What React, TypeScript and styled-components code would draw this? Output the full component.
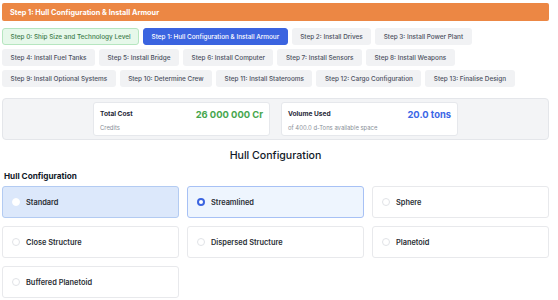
import * as React from 'react'
import styled, { createGlobalStyle, css } from 'styled-components'

const GlobalStyle = createGlobalStyle`
  html, body {
    margin: 0;
    padding: 0;
    background: #ffffff;
    font-family: Inter, "Noto Sans", sans-serif;
    color: #1f2937;
  }
`

const Page = styled.div`
  width: 547px;
  margin: 3px 0 0 2px;
  display: flex;
  flex-direction: column;
`

const StepHeader = styled.div`
  height: 18px;
  background: #ec8744;
  border-radius: 2px;
  color: #ffffff;
  font-size: 7.3px;
  font-weight: 700;
  display: flex;
  align-items: center;
  padding: 0 8px;
`

const StepNav = styled.div`
  display: flex;
  flex-wrap: wrap;
  gap: 4px;
  margin-top: 7px;
`

type StepState = 'done' | 'active' | 'todo'

const StepButton = styled.div<{ $state: StepState }>`
  height: 17px;
  box-sizing: border-box;
  padding: 0 7.5px;
  display: flex;
  align-items: center;
  font-size: 6.4px;
  font-weight: 500;
  border-radius: 3px;
  border: 0.5px solid transparent;
  background: #f1f2f4;
  color: #4b5060;
  ${({ $state }) => $state === 'done' && css`
    background: #e6f8ea;
    border-color: #b6e6c0;
    color: #3f7d4d;
  `}
  ${({ $state }) => $state === 'active' && css`
    background: #3b64e0;
    border-color: #3b64e0;
    color: #ffffff;
  `}
`

const StatsPanel = styled.div`
  margin-top: 11px;
  height: 42px;
  box-sizing: border-box;
  background: #f3f4f6;
  border: 1px solid #e4e6ea;
  border-radius: 4px;
  display: flex;
  justify-content: center;
  align-items: center;
  gap: 11px;
`

const StatCard = styled.div`
  width: 177px;
  height: 34px;
  box-sizing: border-box;
  background: #ffffff;
  border: 1px solid #e6e8ec;
  border-radius: 3px;
  padding: 4px 6px 0 6px;
  display: flex;
  flex-direction: column;
`

const StatTop = styled.div`
  display: flex;
  justify-content: space-between;
  align-items: center;
  height: 14px;
`

const StatLabel = styled.span`
  font-size: 6.6px;
  font-weight: 700;
  color: #1f2937;
`

const StatValue = styled.span<{ $color: string }>`
  font-size: 9.4px;
  font-weight: 700;
  color: ${({ $color }) => $color};
`

const StatSub = styled.span`
  font-size: 5.9px;
  color: #8a8f98;
  margin-top: 3px;
`

const SectionTitle = styled.h2`
  margin: 9px 0 0 0;
  text-align: center;
  font-size: 10.6px;
  font-weight: 500;
  color: #111827;
`

const GroupTitle = styled.h3`
  margin: 9px 0 0 2px;
  font-size: 8.2px;
  font-weight: 700;
  color: #111827;
`

const OptionGrid = styled.div`
  margin-top: 5px;
  display: grid;
  grid-template-columns: repeat(3, 1fr);
  gap: 8px;
`

type OptionState = 'hover' | 'selected' | 'plain'

const OptionCard = styled.div<{ $state: OptionState }>`
  height: 32px;
  box-sizing: border-box;
  border-radius: 3px;
  border: 1px solid #e8e9ec;
  background: #ffffff;
  display: flex;
  align-items: center;
  gap: 6px;
  padding-left: 9px;
  font-size: 7.4px;
  font-weight: 600;
  color: #2b2f36;
  ${({ $state }) => $state === 'hover' && css`
    background: #dce8fb;
    border-color: #b3cbf2;
  `}
  ${({ $state }) => $state === 'selected' && css`
    background: #eef5fe;
    border-color: #a7c1f5;
  `}
`

const Radio = styled.span<{ $checked: boolean; $light: boolean }>`
  width: 8px;
  height: 8px;
  box-sizing: border-box;
  border-radius: 50%;
  border: 1px solid #e1e3e7;
  background: #ffffff;
  ${({ $light }) => $light && css`
    border-color: #ffffff;
  `}
  ${({ $checked }) => $checked && css`
    border: 2.2px solid #3b64e0;
  `}
`

const steps = [
  'Step 0: Ship Size and Technology Level',
  'Step 1: Hull Configuration & Install Armour',
  'Step 2: Install Drives',
  'Step 3: Install Power Plant',
  'Step 4: Install Fuel Tanks',
  'Step 5: Install Bridge',
  'Step 6: Install Computer',
  'Step 7: Install Sensors',
  'Step 8: Install Weapons',
  'Step 9: Install Optional Systems',
  'Step 10: Determine Crew',
  'Step 11: Install Staterooms',
  'Step 12: Cargo Configuration',
  'Step 13: Finalise Design',
]

const options: { name: string; state: OptionState }[] = [
  { name: 'Standard', state: 'hover' },
  { name: 'Streamlined', state: 'selected' },
  { name: 'Sphere', state: 'plain' },
  { name: 'Close Structure', state: 'plain' },
  { name: 'Dispersed Structure', state: 'plain' },
  { name: 'Planetoid', state: 'plain' },
  { name: 'Buffered Planetoid', state: 'plain' },
]

export default function App() {
  return <Page>
    <GlobalStyle />
    <StepHeader>Step 1: Hull Configuration &amp; Install Armour</StepHeader>
    <StepNav>
      {steps.map((s, i) => (
        <StepButton key={s} $state={i === 0 ? 'done' : i === 1 ? 'active' : 'todo'}>{s}</StepButton>
      ))}
    </StepNav>
    <StatsPanel>
      <StatCard>
        <StatTop>
          <StatLabel>Total Cost</StatLabel>
          <StatValue $color="#46a64d">26 000 000 Cr</StatValue>
        </StatTop>
        <StatSub>Credits</StatSub>
      </StatCard>
      <StatCard>
        <StatTop>
          <StatLabel>Volume Used</StatLabel>
          <StatValue $color="#3b66e6">20.0 tons</StatValue>
        </StatTop>
        <StatSub>of 400.0 d-Tons available space</StatSub>
      </StatCard>
    </StatsPanel>
    <SectionTitle>Hull Configuration</SectionTitle>
    <GroupTitle>Hull Configuration</GroupTitle>
    <OptionGrid>
      {options.map(o => (
        <OptionCard key={o.name} $state={o.state}>
          <Radio $checked={o.state === 'selected'} $light={o.state === 'hover'} />
          {o.name}
        </OptionCard>
      ))}
    </OptionGrid>
  </Page>
}
